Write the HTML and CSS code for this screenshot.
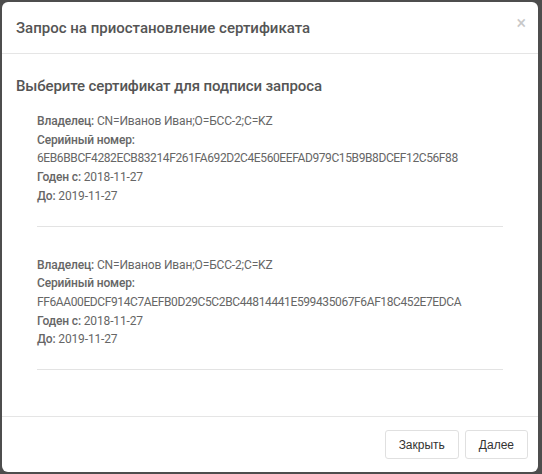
FILE: index.html
```html
<!DOCTYPE html>
<html lang="ru">
<head>
<meta charset="utf-8">
<title>Запрос на приостановление сертификата</title>
<link rel="stylesheet" href="styles.css">
</head>
<body>
<div class="modal">
  <div class="modal-header">
    <h4 class="modal-title">Запрос на приостановление сертификата</h4>
    <span class="close">&times;</span>
  </div>
  <div class="modal-body">
    <h3 class="section-title">Выберите сертификат для подписи запроса</h3>
    <div class="cert first">
      <div class="line"><b>Владелец:</b> CN=Иванов Иван;O=БСС-2;C=KZ</div>
      <div class="line"><b>Серийный номер:</b></div>
      <div class="line hex">6EB6BBCF4282ECB83214F261FA692D2C4E560EEFAD979C15B9B8DCEF12C56F88</div>
      <div class="line"><b>Годен с:</b> 2018-11-27</div>
      <div class="line"><b>До:</b> 2019-11-27</div>
    </div>
    <div class="cert">
      <div class="line"><b>Владелец:</b> CN=Иванов Иван;O=БСС-2;C=KZ</div>
      <div class="line"><b>Серийный номер:</b></div>
      <div class="line hex">FF6AA00EDCF914C7AEFB0D29C5C2BC44814441E599435067F6AF18C452E7EDCA</div>
      <div class="line"><b>Годен с:</b> 2018-11-27</div>
      <div class="line"><b>До:</b> 2019-11-27</div>
    </div>
  </div>
  <div class="modal-footer">
    <button class="btn">Закрыть</button>
    <button class="btn">Далее</button>
  </div>
</div>
</body>
</html>
```
FILE: styles.css
```css
html, body {
  margin: 0;
  height: 100%;
}
body {
  background: #4d4d4d;
  padding: 2px;
  box-sizing: border-box;
  font-family: Roboto, "Open Sans", sans-serif;
}
.modal {
  background: #fff;
  border-radius: 6px;
  height: 470px;
  width: 536px;
  display: flex;
  flex-direction: column;
  position: relative;
  overflow: hidden;
}
.modal-header {
  height: 51px;
  border-bottom: 1px solid #e5e5e5;
  display: flex;
  align-items: center;
  padding: 0 14px;
}
.modal-title {
  margin: 0;
  font-size: 15px;
  font-weight: 500;
  color: #555;
}
.close {
  position: absolute;
  right: 12px;
  top: 10px;
  font-size: 18px;
  color: #c8c8c8;
}
.modal-body {
  flex: 1;
  padding: 21px 14px 0;
}
.section-title {
  margin: 0;
  font-size: 15px;
  line-height: 22px;
  font-weight: 500;
  color: #555;
  letter-spacing: -0.12px;
}
.cert {
  margin: 0 21px;
  padding: 29px 0 20px;
  border-bottom: 1px solid #e3e3e3;
  font-size: 12px;
  color: #666;
}
.cert.first {
  padding-top: 15px;
}
.line {
  line-height: 18.7px;
  white-space: nowrap;
  letter-spacing: -0.15px;
}
.line.hex {
  letter-spacing: -0.39px;
}
.line b {
  font-weight: 500;
  color: #666;
}
.modal-footer {
  border-top: 1px solid #e5e5e5;
  height: 55px;
  display: flex;
  justify-content: flex-end;
  align-items: center;
  gap: 6px;
  padding: 0 10px;
}
.btn {
  font-family: "Liberation Sans", Arial, sans-serif;
  font-size: 12px;
  color: #333;
  background: #fff;
  border: 1px solid #e0e0e0;
  border-radius: 3px;
  height: 29px;
  padding: 0 13px;
}
```
